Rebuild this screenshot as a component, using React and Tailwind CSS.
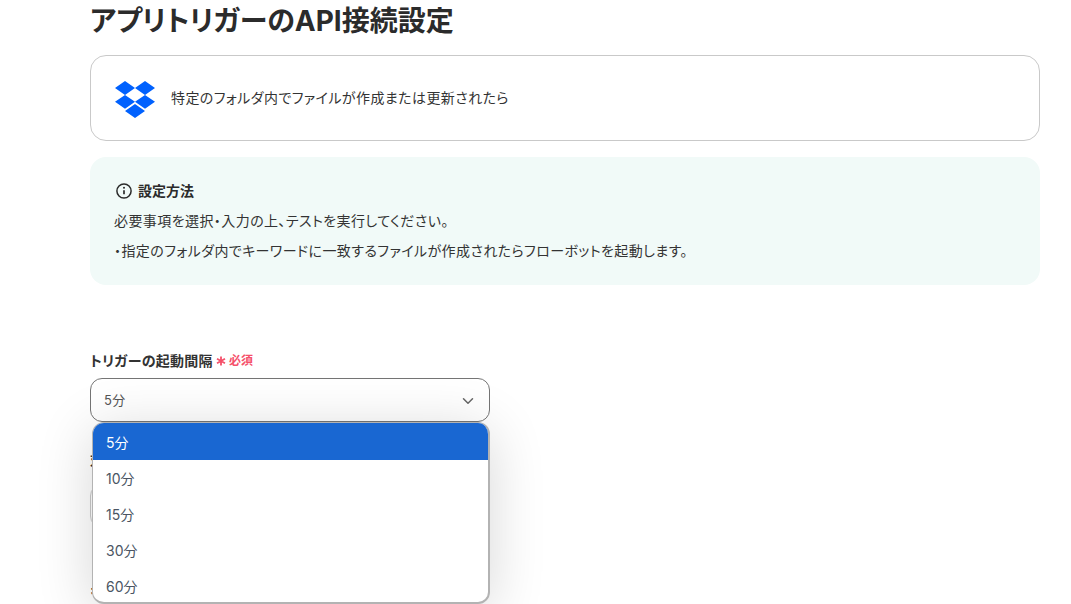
import { ChevronDown } from "lucide-react"

const FONT = "font-['Inter','Noto_Sans_CJK_JP',sans-serif]"

const options = ["5分", "10分", "15分", "30分", "60分"]

const DropboxLogo = () => (
  <svg viewBox="0 1.8 24 20.4" preserveAspectRatio="none" className="w-10 h-[37px] shrink-0 mt-[2px]" fill="#0061fe">
    <path d="M6 1.807L0 5.629l6 3.822 6.001-3.822L6 1.807zM18 1.807l-6 3.822 6 3.822 6-3.822-6-3.822zM0 13.274l6 3.822 6.001-3.822L6 9.452l-6 3.822zM18 9.452l-6 3.822 6 3.822 6-3.822-6-3.822zM6 18.371l6.001 3.822 6-3.822-6-3.822L6 18.371z" />
  </svg>
)

const InfoIcon = () => (
  <svg viewBox="0 0 16 16" className="w-4 h-4 shrink-0" fill="none" stroke="#2b2b2b" strokeWidth="1.5">
    <circle cx="8" cy="8" r="7.1" />
    <path d="M8 7.2v4" strokeWidth="1.7" />
    <circle cx="8" cy="4.7" r="1" fill="#2b2b2b" stroke="none" />
  </svg>
)

export default function App() {
  return (
    <div className={`w-[1071px] h-[604px] overflow-hidden bg-white text-[#2b2b2b] pl-[90px] pr-[31px] ${FONT}`}>
      <h1 className="h-[55px] pt-[1px] text-[28px] leading-[40px] font-bold [font-feature-settings:'palt']">
        アプリトリガーのAPI接続設定
      </h1>

      <div className="h-[86px] flex items-center gap-4 px-6 border border-[#c9c9c9] rounded-2xl">
        <DropboxLogo />
        <p className="text-sm tracking-[0.03em] text-[#333] [font-feature-settings:'palt']">特定のフォルダ内でファイルが作成または更新されたら</p>
      </div>

      <div className="mt-4 h-[128px] rounded-2xl bg-[#f1faf8] px-6 pt-[24px] text-sm tracking-[0.03em] text-[#333] [font-feature-settings:'palt']">
        <div className="flex items-center gap-[6px] h-5 pl-[2px]">
          <InfoIcon />
          <span className="font-bold text-[#2b2b2b] tracking-normal">設定方法</span>
        </div>
        <p className="mt-[9px] leading-[22px]">必要事項を選択・入力の上、テストを実行してください。</p>
        <p className="mt-2 leading-[22px]">・指定のフォルダ内でキーワードに一致するファイルが作成されたらフローボットを起動します。</p>
      </div>

      <div className="mt-[66px] w-[400px]">
        <div className="flex items-center gap-[3px] h-5 text-sm font-semibold tracking-[0.02em] text-[#333] [font-feature-settings:'palt']">
          <span>トリガーの起動間隔</span>
          <span className="flex items-center gap-[3px] text-xs tracking-normal text-[#f5506a]">
            <svg viewBox="0 0 10 10" className="w-[10px] h-[10px]" stroke="#f5506a" strokeWidth="1.8">
              <path d="M5 0.5v9M1 2.8l8 4.4M9 2.8L1 7.2" />
            </svg>
            必須
          </span>
        </div>

        <div className="relative mt-[7px]">
          <div className="h-11 flex items-center justify-between pl-[13px] pr-3 pt-[1px] border border-[#757575] rounded-xl bg-white text-[13px] tracking-[0.02em] text-[#555] [font-feature-settings:'palt']">
            <span>5分</span>
            <ChevronDown className="w-[18px] h-[18px] text-[#666]" strokeWidth={2} />
          </div>

          <ul className="absolute z-10 left-[2px] right-0 top-[44px] h-[182px] overflow-hidden rounded-xl bg-white border border-r-2 border-b-2 border-[#b3b3b3] shadow-[0_8px_56px_rgba(0,0,0,0.16)] text-sm text-[#4b5563]">
            {options.map((opt, i) => (
              <li
                key={opt}
                className={`flex items-center pl-[13px] pt-[2px] ${i === 0 ? "h-[37px] bg-[#1967d2] text-white" : "h-9"}`}
              >
                {opt}
              </li>
            ))}
          </ul>
        </div>

        <p className="mt-[28px] text-sm font-semibold leading-5 text-[#333]">対象のフォルダ</p>
        <div className="mt-[14px] h-11 border border-[#c9c9c9] rounded-xl" />
        <p className="mt-[53px] text-sm font-semibold leading-5 text-[#333]">キーワード</p>
      </div>
    </div>
  )
}
